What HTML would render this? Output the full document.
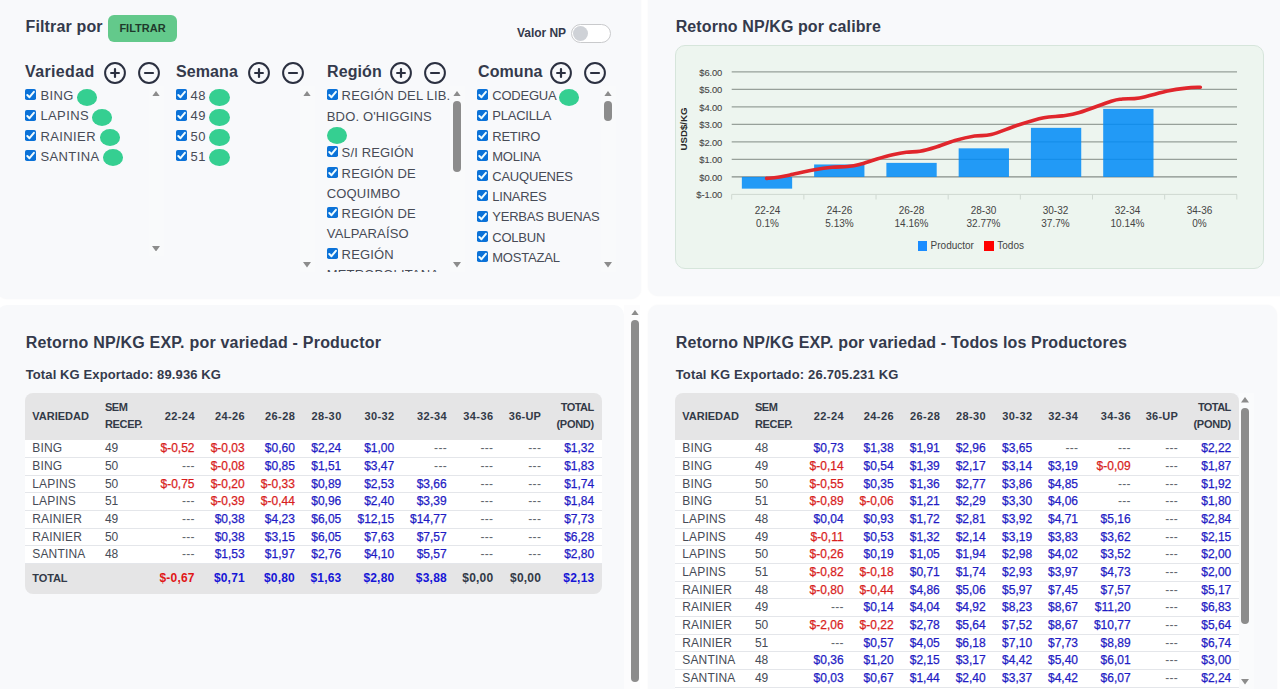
<!DOCTYPE html>
<html><head><meta charset="utf-8"><title>Retorno NP/KG</title>
<style>
html,body{margin:0;padding:0;}
body{width:1280px;height:689px;overflow:hidden;position:relative;background:#ffffff;font-family:"Liberation Sans", sans-serif;}
.t{position:absolute;white-space:nowrap;}
.r{position:absolute;}
</style></head><body>
<div class="r" style="left:-3.00px;top:-20.00px;width:644.00px;height:319.00px;background:#f8f9fb;border-radius:10px;box-shadow:0 0 2px rgba(0,0,0,0.04);"></div>
<div class="r" style="left:648.00px;top:-20.00px;width:645.00px;height:316.00px;background:#f8f9fb;border-radius:10px;box-shadow:0 0 2px rgba(0,0,0,0.04);"></div>
<div class="r" style="left:-3.00px;top:305.00px;width:627.00px;height:420.00px;background:#f8f9fb;border-radius:10px;"></div>
<div class="r" style="left:648.00px;top:305.00px;width:629.00px;height:420.00px;background:#f8f9fb;border-radius:10px;box-shadow:0 0 2px rgba(0,0,0,0.04);"></div>
<div class="t" style="left:25.50px;top:18.76px;font-size:16px;line-height:16px;font-weight:bold;color:#343a4c;letter-spacing:0.15px;">Filtrar por</div>
<div class="r" style="left:108.00px;top:15.00px;width:69.00px;height:27.00px;background:#63c98b;border-radius:6px;"></div>
<div class="t" style="left:-57.50px;width:400px;text-align:center;top:22.59px;font-size:11px;line-height:11px;font-weight:bold;color:#1f3a2b;">FILTRAR</div>
<div class="t" style="left:517.00px;top:26.84px;font-size:12px;line-height:12px;font-weight:bold;color:#343a4c;letter-spacing:-0.05px;">Valor NP</div>
<div class="r" style="left:570.50px;top:23.50px;width:40.00px;height:19.50px;box-sizing:border-box;border:1px solid #c9cacc;background:#fff;border-radius:10px;"></div>
<div class="r" style="left:573.00px;top:26.00px;width:15.00px;height:15.00px;background:#cfd2d7;border-radius:50%;"></div>
<div class="t" style="left:25.00px;top:64.21px;font-size:16px;line-height:16px;font-weight:bold;color:#343a4c;letter-spacing:0.35px;">Variedad</div>
<svg class="r" style="left:104.00px;top:61.70px" width="22" height="22" viewBox="0 0 22 22"><circle cx="11" cy="11" r="9.9" fill="none" stroke="#2b3040" stroke-width="2"/><path d="M11 7.1V14.9M7.1 11H14.9" stroke="#2b3040" stroke-width="2.2" stroke-linecap="round"/></svg>
<svg class="r" style="left:137.50px;top:61.70px" width="22" height="22" viewBox="0 0 22 22"><circle cx="11" cy="11" r="9.9" fill="none" stroke="#2b3040" stroke-width="2"/><path d="M7.0 11H15.0" stroke="#2b3040" stroke-width="2.2" stroke-linecap="round"/></svg>
<div class="t" style="left:176.00px;top:64.21px;font-size:16px;line-height:16px;font-weight:bold;color:#343a4c;letter-spacing:0.1px;">Semana</div>
<svg class="r" style="left:248.00px;top:61.70px" width="22" height="22" viewBox="0 0 22 22"><circle cx="11" cy="11" r="9.9" fill="none" stroke="#2b3040" stroke-width="2"/><path d="M11 7.1V14.9M7.1 11H14.9" stroke="#2b3040" stroke-width="2.2" stroke-linecap="round"/></svg>
<svg class="r" style="left:282.00px;top:61.70px" width="22" height="22" viewBox="0 0 22 22"><circle cx="11" cy="11" r="9.9" fill="none" stroke="#2b3040" stroke-width="2"/><path d="M7.0 11H15.0" stroke="#2b3040" stroke-width="2.2" stroke-linecap="round"/></svg>
<div class="t" style="left:327.00px;top:64.21px;font-size:16px;line-height:16px;font-weight:bold;color:#343a4c;letter-spacing:0.1px;">Región</div>
<svg class="r" style="left:390.10px;top:61.70px" width="22" height="22" viewBox="0 0 22 22"><circle cx="11" cy="11" r="9.9" fill="none" stroke="#2b3040" stroke-width="2"/><path d="M11 7.1V14.9M7.1 11H14.9" stroke="#2b3040" stroke-width="2.2" stroke-linecap="round"/></svg>
<svg class="r" style="left:423.50px;top:61.70px" width="22" height="22" viewBox="0 0 22 22"><circle cx="11" cy="11" r="9.9" fill="none" stroke="#2b3040" stroke-width="2"/><path d="M7.0 11H15.0" stroke="#2b3040" stroke-width="2.2" stroke-linecap="round"/></svg>
<div class="t" style="left:478.00px;top:64.21px;font-size:16px;line-height:16px;font-weight:bold;color:#343a4c;letter-spacing:0.1px;">Comuna</div>
<svg class="r" style="left:550.00px;top:61.70px" width="22" height="22" viewBox="0 0 22 22"><circle cx="11" cy="11" r="9.9" fill="none" stroke="#2b3040" stroke-width="2"/><path d="M11 7.1V14.9M7.1 11H14.9" stroke="#2b3040" stroke-width="2.2" stroke-linecap="round"/></svg>
<svg class="r" style="left:583.70px;top:61.70px" width="22" height="22" viewBox="0 0 22 22"><circle cx="11" cy="11" r="9.9" fill="none" stroke="#2b3040" stroke-width="2"/><path d="M7.0 11H15.0" stroke="#2b3040" stroke-width="2.2" stroke-linecap="round"/></svg>
<svg class="r" style="left:25.30px;top:89.30px" width="11" height="11" viewBox="0 0 11 11"><rect x="0" y="0" width="11" height="11" rx="1.8" fill="#0b72d8"/><path d="M2.3 6.0L4.5 8.2L8.9 2.8" fill="none" stroke="#effcff" stroke-width="2" stroke-linecap="round" stroke-linejoin="round"/></svg>
<div class="t" style="left:40.40px;top:89.20px;font-size:13px;line-height:13px;font-weight:normal;color:#474b56;letter-spacing:0.4px;">BING</div>
<div class="r" style="left:77.00px;top:88.50px;width:20.40px;height:17.00px;background:#35cf91;border-radius:50%;"></div>
<svg class="r" style="left:25.30px;top:109.50px" width="11" height="11" viewBox="0 0 11 11"><rect x="0" y="0" width="11" height="11" rx="1.8" fill="#0b72d8"/><path d="M2.3 6.0L4.5 8.2L8.9 2.8" fill="none" stroke="#effcff" stroke-width="2" stroke-linecap="round" stroke-linejoin="round"/></svg>
<div class="t" style="left:40.40px;top:109.40px;font-size:13px;line-height:13px;font-weight:normal;color:#474b56;letter-spacing:0.4px;">LAPINS</div>
<div class="r" style="left:92.00px;top:108.70px;width:20.40px;height:17.00px;background:#35cf91;border-radius:50%;"></div>
<svg class="r" style="left:25.30px;top:129.70px" width="11" height="11" viewBox="0 0 11 11"><rect x="0" y="0" width="11" height="11" rx="1.8" fill="#0b72d8"/><path d="M2.3 6.0L4.5 8.2L8.9 2.8" fill="none" stroke="#effcff" stroke-width="2" stroke-linecap="round" stroke-linejoin="round"/></svg>
<div class="t" style="left:40.40px;top:129.60px;font-size:13px;line-height:13px;font-weight:normal;color:#474b56;letter-spacing:0.4px;">RAINIER</div>
<div class="r" style="left:99.50px;top:128.90px;width:20.40px;height:17.00px;background:#35cf91;border-radius:50%;"></div>
<svg class="r" style="left:25.30px;top:149.90px" width="11" height="11" viewBox="0 0 11 11"><rect x="0" y="0" width="11" height="11" rx="1.8" fill="#0b72d8"/><path d="M2.3 6.0L4.5 8.2L8.9 2.8" fill="none" stroke="#effcff" stroke-width="2" stroke-linecap="round" stroke-linejoin="round"/></svg>
<div class="t" style="left:40.40px;top:149.80px;font-size:13px;line-height:13px;font-weight:normal;color:#474b56;letter-spacing:0.4px;">SANTINA</div>
<div class="r" style="left:103.00px;top:149.10px;width:20.40px;height:17.00px;background:#35cf91;border-radius:50%;"></div>
<svg class="r" style="left:175.60px;top:89.30px" width="11" height="11" viewBox="0 0 11 11"><rect x="0" y="0" width="11" height="11" rx="1.8" fill="#0b72d8"/><path d="M2.3 6.0L4.5 8.2L8.9 2.8" fill="none" stroke="#effcff" stroke-width="2" stroke-linecap="round" stroke-linejoin="round"/></svg>
<div class="t" style="left:190.60px;top:89.20px;font-size:13px;line-height:13px;font-weight:normal;color:#474b56;letter-spacing:0.4px;">48</div>
<div class="r" style="left:209.30px;top:88.50px;width:20.40px;height:17.00px;background:#35cf91;border-radius:50%;"></div>
<svg class="r" style="left:175.60px;top:109.50px" width="11" height="11" viewBox="0 0 11 11"><rect x="0" y="0" width="11" height="11" rx="1.8" fill="#0b72d8"/><path d="M2.3 6.0L4.5 8.2L8.9 2.8" fill="none" stroke="#effcff" stroke-width="2" stroke-linecap="round" stroke-linejoin="round"/></svg>
<div class="t" style="left:190.60px;top:109.40px;font-size:13px;line-height:13px;font-weight:normal;color:#474b56;letter-spacing:0.4px;">49</div>
<div class="r" style="left:209.30px;top:108.70px;width:20.40px;height:17.00px;background:#35cf91;border-radius:50%;"></div>
<svg class="r" style="left:175.60px;top:129.70px" width="11" height="11" viewBox="0 0 11 11"><rect x="0" y="0" width="11" height="11" rx="1.8" fill="#0b72d8"/><path d="M2.3 6.0L4.5 8.2L8.9 2.8" fill="none" stroke="#effcff" stroke-width="2" stroke-linecap="round" stroke-linejoin="round"/></svg>
<div class="t" style="left:190.60px;top:129.60px;font-size:13px;line-height:13px;font-weight:normal;color:#474b56;letter-spacing:0.4px;">50</div>
<div class="r" style="left:209.30px;top:128.90px;width:20.40px;height:17.00px;background:#35cf91;border-radius:50%;"></div>
<svg class="r" style="left:175.60px;top:149.90px" width="11" height="11" viewBox="0 0 11 11"><rect x="0" y="0" width="11" height="11" rx="1.8" fill="#0b72d8"/><path d="M2.3 6.0L4.5 8.2L8.9 2.8" fill="none" stroke="#effcff" stroke-width="2" stroke-linecap="round" stroke-linejoin="round"/></svg>
<div class="t" style="left:190.60px;top:149.80px;font-size:13px;line-height:13px;font-weight:normal;color:#474b56;letter-spacing:0.4px;">51</div>
<div class="r" style="left:209.30px;top:149.10px;width:20.40px;height:17.00px;background:#35cf91;border-radius:50%;"></div>
<div class="r" style="left:320px;top:86px;width:150px;height:186px;overflow:hidden">
<svg class="r" style="left:6.80px;top:3.30px" width="11" height="11" viewBox="0 0 11 11"><rect x="0" y="0" width="11" height="11" rx="1.8" fill="#0b72d8"/><path d="M2.3 6.0L4.5 8.2L8.9 2.8" fill="none" stroke="#effcff" stroke-width="2" stroke-linecap="round" stroke-linejoin="round"/></svg>
<div class="t" style="left:21.60px;top:3.20px;font-size:13px;line-height:13px;color:#474b56;letter-spacing:0.15px;white-space:nowrap">REGIÓN DEL LIB.</div>
<div class="t" style="left:6.80px;top:23.90px;font-size:13px;line-height:13px;color:#474b56;letter-spacing:0.15px;white-space:nowrap">BDO. O'HIGGINS</div>
<svg class="r" style="left:6.80px;top:60.40px" width="11" height="11" viewBox="0 0 11 11"><rect x="0" y="0" width="11" height="11" rx="1.8" fill="#0b72d8"/><path d="M2.3 6.0L4.5 8.2L8.9 2.8" fill="none" stroke="#effcff" stroke-width="2" stroke-linecap="round" stroke-linejoin="round"/></svg>
<div class="t" style="left:21.60px;top:60.30px;font-size:13px;line-height:13px;color:#474b56;letter-spacing:0.15px;white-space:nowrap">S/I REGIÓN</div>
<svg class="r" style="left:6.80px;top:81.00px" width="11" height="11" viewBox="0 0 11 11"><rect x="0" y="0" width="11" height="11" rx="1.8" fill="#0b72d8"/><path d="M2.3 6.0L4.5 8.2L8.9 2.8" fill="none" stroke="#effcff" stroke-width="2" stroke-linecap="round" stroke-linejoin="round"/></svg>
<div class="t" style="left:21.60px;top:80.90px;font-size:13px;line-height:13px;color:#474b56;letter-spacing:0.15px;white-space:nowrap">REGIÓN DE</div>
<div class="t" style="left:6.80px;top:100.80px;font-size:13px;line-height:13px;color:#474b56;letter-spacing:0.15px;white-space:nowrap">COQUIMBO</div>
<svg class="r" style="left:6.80px;top:121.10px" width="11" height="11" viewBox="0 0 11 11"><rect x="0" y="0" width="11" height="11" rx="1.8" fill="#0b72d8"/><path d="M2.3 6.0L4.5 8.2L8.9 2.8" fill="none" stroke="#effcff" stroke-width="2" stroke-linecap="round" stroke-linejoin="round"/></svg>
<div class="t" style="left:21.60px;top:121.00px;font-size:13px;line-height:13px;color:#474b56;letter-spacing:0.15px;white-space:nowrap">REGIÓN DE</div>
<div class="t" style="left:6.80px;top:141.00px;font-size:13px;line-height:13px;color:#474b56;letter-spacing:0.15px;white-space:nowrap">VALPARAÍSO</div>
<svg class="r" style="left:6.80px;top:161.60px" width="11" height="11" viewBox="0 0 11 11"><rect x="0" y="0" width="11" height="11" rx="1.8" fill="#0b72d8"/><path d="M2.3 6.0L4.5 8.2L8.9 2.8" fill="none" stroke="#effcff" stroke-width="2" stroke-linecap="round" stroke-linejoin="round"/></svg>
<div class="t" style="left:21.60px;top:161.50px;font-size:13px;line-height:13px;color:#474b56;letter-spacing:0.15px;white-space:nowrap">REGIÓN</div>
<div class="t" style="left:6.80px;top:181.70px;font-size:13px;line-height:13px;color:#474b56;letter-spacing:0.15px;white-space:nowrap">METROPOLITANA</div>
<div class="r" style="left:6.8px;top:40.60px;width:19.8px;height:17px;background:#35cf91;border-radius:50%"></div>
</div>
<svg class="r" style="left:477.20px;top:89.30px" width="11" height="11" viewBox="0 0 11 11"><rect x="0" y="0" width="11" height="11" rx="1.8" fill="#0b72d8"/><path d="M2.3 6.0L4.5 8.2L8.9 2.8" fill="none" stroke="#effcff" stroke-width="2" stroke-linecap="round" stroke-linejoin="round"/></svg>
<div class="t" style="left:492.20px;top:89.20px;font-size:13px;line-height:13px;font-weight:normal;color:#474b56;letter-spacing:-0.2px;">CODEGUA</div>
<svg class="r" style="left:477.20px;top:109.50px" width="11" height="11" viewBox="0 0 11 11"><rect x="0" y="0" width="11" height="11" rx="1.8" fill="#0b72d8"/><path d="M2.3 6.0L4.5 8.2L8.9 2.8" fill="none" stroke="#effcff" stroke-width="2" stroke-linecap="round" stroke-linejoin="round"/></svg>
<div class="t" style="left:492.20px;top:109.40px;font-size:13px;line-height:13px;font-weight:normal;color:#474b56;letter-spacing:-0.2px;">PLACILLA</div>
<svg class="r" style="left:477.20px;top:129.70px" width="11" height="11" viewBox="0 0 11 11"><rect x="0" y="0" width="11" height="11" rx="1.8" fill="#0b72d8"/><path d="M2.3 6.0L4.5 8.2L8.9 2.8" fill="none" stroke="#effcff" stroke-width="2" stroke-linecap="round" stroke-linejoin="round"/></svg>
<div class="t" style="left:492.20px;top:129.60px;font-size:13px;line-height:13px;font-weight:normal;color:#474b56;letter-spacing:-0.2px;">RETIRO</div>
<svg class="r" style="left:477.20px;top:149.90px" width="11" height="11" viewBox="0 0 11 11"><rect x="0" y="0" width="11" height="11" rx="1.8" fill="#0b72d8"/><path d="M2.3 6.0L4.5 8.2L8.9 2.8" fill="none" stroke="#effcff" stroke-width="2" stroke-linecap="round" stroke-linejoin="round"/></svg>
<div class="t" style="left:492.20px;top:149.80px;font-size:13px;line-height:13px;font-weight:normal;color:#474b56;letter-spacing:-0.2px;">MOLINA</div>
<svg class="r" style="left:477.20px;top:170.10px" width="11" height="11" viewBox="0 0 11 11"><rect x="0" y="0" width="11" height="11" rx="1.8" fill="#0b72d8"/><path d="M2.3 6.0L4.5 8.2L8.9 2.8" fill="none" stroke="#effcff" stroke-width="2" stroke-linecap="round" stroke-linejoin="round"/></svg>
<div class="t" style="left:492.20px;top:170.00px;font-size:13px;line-height:13px;font-weight:normal;color:#474b56;letter-spacing:-0.2px;">CAUQUENES</div>
<svg class="r" style="left:477.20px;top:190.30px" width="11" height="11" viewBox="0 0 11 11"><rect x="0" y="0" width="11" height="11" rx="1.8" fill="#0b72d8"/><path d="M2.3 6.0L4.5 8.2L8.9 2.8" fill="none" stroke="#effcff" stroke-width="2" stroke-linecap="round" stroke-linejoin="round"/></svg>
<div class="t" style="left:492.20px;top:190.20px;font-size:13px;line-height:13px;font-weight:normal;color:#474b56;letter-spacing:-0.2px;">LINARES</div>
<svg class="r" style="left:477.20px;top:210.50px" width="11" height="11" viewBox="0 0 11 11"><rect x="0" y="0" width="11" height="11" rx="1.8" fill="#0b72d8"/><path d="M2.3 6.0L4.5 8.2L8.9 2.8" fill="none" stroke="#effcff" stroke-width="2" stroke-linecap="round" stroke-linejoin="round"/></svg>
<div class="t" style="left:492.20px;top:210.40px;font-size:13px;line-height:13px;font-weight:normal;color:#474b56;letter-spacing:-0.2px;">YERBAS BUENAS</div>
<svg class="r" style="left:477.20px;top:230.70px" width="11" height="11" viewBox="0 0 11 11"><rect x="0" y="0" width="11" height="11" rx="1.8" fill="#0b72d8"/><path d="M2.3 6.0L4.5 8.2L8.9 2.8" fill="none" stroke="#effcff" stroke-width="2" stroke-linecap="round" stroke-linejoin="round"/></svg>
<div class="t" style="left:492.20px;top:230.60px;font-size:13px;line-height:13px;font-weight:normal;color:#474b56;letter-spacing:-0.2px;">COLBUN</div>
<svg class="r" style="left:477.20px;top:250.90px" width="11" height="11" viewBox="0 0 11 11"><rect x="0" y="0" width="11" height="11" rx="1.8" fill="#0b72d8"/><path d="M2.3 6.0L4.5 8.2L8.9 2.8" fill="none" stroke="#effcff" stroke-width="2" stroke-linecap="round" stroke-linejoin="round"/></svg>
<div class="t" style="left:492.20px;top:250.80px;font-size:13px;line-height:13px;font-weight:normal;color:#474b56;letter-spacing:-0.2px;">MOSTAZAL</div>
<div class="r" style="left:558.80px;top:88.50px;width:20.40px;height:17.00px;background:#35cf91;border-radius:50%;"></div>
<div class="r" style="left:148.50px;top:86.00px;width:15.00px;height:169.50px;background:rgba(255,255,255,0.2);"></div>
<svg class="r" style="left:152.00px;top:90.50px" width="8" height="5.5" viewBox="0 0 8 5.5"><path d="M4 0L8 5.5H0Z" fill="#8c8c8c"/></svg>
<svg class="r" style="left:152.00px;top:245.50px" width="8" height="5.5" viewBox="0 0 8 5.5"><path d="M0 0H8L4 5.5Z" fill="#8c8c8c"/></svg>
<div class="r" style="left:299.50px;top:86.00px;width:15.00px;height:186.00px;background:rgba(255,255,255,0.2);"></div>
<svg class="r" style="left:303.00px;top:90.50px" width="8" height="5.5" viewBox="0 0 8 5.5"><path d="M4 0L8 5.5H0Z" fill="#8c8c8c"/></svg>
<svg class="r" style="left:303.00px;top:262.00px" width="8" height="5.5" viewBox="0 0 8 5.5"><path d="M0 0H8L4 5.5Z" fill="#8c8c8c"/></svg>
<div class="r" style="left:449.70px;top:86.00px;width:15.00px;height:186.00px;background:rgba(255,255,255,0.2);"></div>
<svg class="r" style="left:453.20px;top:90.50px" width="8" height="5.5" viewBox="0 0 8 5.5"><path d="M4 0L8 5.5H0Z" fill="#8c8c8c"/></svg>
<svg class="r" style="left:453.20px;top:262.00px" width="8" height="5.5" viewBox="0 0 8 5.5"><path d="M0 0H8L4 5.5Z" fill="#8c8c8c"/></svg>
<div class="r" style="left:600.50px;top:86.00px;width:15.00px;height:186.00px;background:rgba(255,255,255,0.2);"></div>
<svg class="r" style="left:604.00px;top:90.50px" width="8" height="5.5" viewBox="0 0 8 5.5"><path d="M4 0L8 5.5H0Z" fill="#8c8c8c"/></svg>
<svg class="r" style="left:604.00px;top:262.00px" width="8" height="5.5" viewBox="0 0 8 5.5"><path d="M0 0H8L4 5.5Z" fill="#8c8c8c"/></svg>
<div class="r" style="left:453.30px;top:101.20px;width:7.80px;height:71.20px;background:#8c8c8c;border-radius:4px;"></div>
<div class="r" style="left:604.10px;top:101.20px;width:7.80px;height:20.30px;background:#8c8c8c;border-radius:4px;"></div>
<div class="t" style="left:675.70px;top:18.56px;font-size:16px;line-height:16px;font-weight:bold;color:#343a4c;letter-spacing:0.1px;">Retorno NP/KG por calibre</div>
<div class="r" style="left:675.30px;top:45.40px;width:588.40px;height:223.40px;box-sizing:border-box;background:#edf5ef;border:1px solid #d6e5db;border-radius:10px;"></div>
<svg class="r" style="left:0;top:0" width="1280" height="300" viewBox="0 0 1280 300">
<line x1="731.7" x2="1237" y1="71.8" y2="71.8" stroke="#222a24" stroke-opacity="0.42" stroke-width="1.25"/>
<line x1="731.7" x2="1237" y1="89.3" y2="89.3" stroke="#222a24" stroke-opacity="0.42" stroke-width="1.25"/>
<line x1="731.7" x2="1237" y1="106.8" y2="106.8" stroke="#222a24" stroke-opacity="0.42" stroke-width="1.25"/>
<line x1="731.7" x2="1237" y1="124.3" y2="124.3" stroke="#222a24" stroke-opacity="0.42" stroke-width="1.25"/>
<line x1="731.7" x2="1237" y1="141.8" y2="141.8" stroke="#222a24" stroke-opacity="0.42" stroke-width="1.25"/>
<line x1="731.7" x2="1237" y1="159.3" y2="159.3" stroke="#222a24" stroke-opacity="0.42" stroke-width="1.25"/>
<line x1="731.7" x2="1237" y1="176.9" y2="176.9" stroke="#222a24" stroke-opacity="0.5" stroke-width="1.25"/>
<rect x="741.85" y="176.90" width="50.3" height="11.74" fill="#008bf7" fill-opacity="0.86"/>
<rect x="814.12" y="164.46" width="50.3" height="12.44" fill="#008bf7" fill-opacity="0.86"/>
<rect x="886.39" y="162.88" width="50.3" height="14.02" fill="#008bf7" fill-opacity="0.86"/>
<rect x="958.66" y="148.34" width="50.3" height="28.56" fill="#008bf7" fill-opacity="0.86"/>
<rect x="1030.93" y="127.84" width="50.3" height="49.06" fill="#008bf7" fill-opacity="0.86"/>
<rect x="1103.20" y="108.92" width="50.3" height="67.98" fill="#008bf7" fill-opacity="0.86"/>
<line x1="731.7" x2="1237" y1="194.4" y2="194.4" stroke="#cfd8d1" stroke-width="1"/>
<line x1="731.70" x2="731.70" y1="194.4" y2="199.5" stroke="#cfd8d1" stroke-width="1"/>
<line x1="803.86" x2="803.86" y1="194.4" y2="199.5" stroke="#cfd8d1" stroke-width="1"/>
<line x1="876.02" x2="876.02" y1="194.4" y2="199.5" stroke="#cfd8d1" stroke-width="1"/>
<line x1="948.18" x2="948.18" y1="194.4" y2="199.5" stroke="#cfd8d1" stroke-width="1"/>
<line x1="1020.34" x2="1020.34" y1="194.4" y2="199.5" stroke="#cfd8d1" stroke-width="1"/>
<line x1="1092.50" x2="1092.50" y1="194.4" y2="199.5" stroke="#cfd8d1" stroke-width="1"/>
<line x1="1164.66" x2="1164.66" y1="194.4" y2="199.5" stroke="#cfd8d1" stroke-width="1"/>
<line x1="1236.82" x2="1236.82" y1="194.4" y2="199.5" stroke="#cfd8d1" stroke-width="1"/>
<path d="M766.6,178.4 C768.50,178.22 774.10,177.88 778,177.3 C781.90,176.72 783.92,176.15 790,174.9 C796.08,173.65 807.50,171.07 814.5,169.8 C821.50,168.53 826.47,167.85 832,167.3 C837.53,166.75 843.13,166.97 847.7,166.5 C852.27,166.03 854.52,165.75 859.4,164.5 C864.28,163.25 871.47,160.62 877,159 C882.53,157.38 887.72,155.93 892.6,154.8 C897.48,153.67 901.73,152.79 906.3,152.2 C910.87,151.61 915.13,152.07 920,151.25 C924.87,150.43 929.67,149.09 935.5,147.3 C941.33,145.51 948.48,142.38 955,140.5 C961.52,138.62 968.56,136.98 974.6,136 C980.64,135.02 984.10,136.39 991.25,134.6 C998.40,132.81 1008.75,128.06 1017.5,125.25 C1026.25,122.44 1036.25,119.31 1043.75,117.75 C1051.25,116.19 1056.56,116.78 1062.5,115.9 C1068.44,115.03 1071.28,114.94 1079.4,112.5 C1087.53,110.06 1104.07,103.50 1111.25,101.25 C1118.43,99.00 1117.81,99.56 1122.5,99 C1127.19,98.44 1131.90,99.23 1139.4,97.9 C1146.90,96.57 1159.69,92.63 1167.5,91 C1175.31,89.37 1180.78,88.73 1186.25,88.1 C1191.72,87.47 1197.96,87.35 1200.3,87.2" fill="none" stroke="#e0262c" stroke-width="3.6" stroke-linecap="round" stroke-linejoin="round"/>
</svg>
<div class="t" style="left:322.18px;width:400px;text-align:right;top:67.64px;font-size:9.4px;line-height:9.4px;font-weight:normal;color:#474747;letter-spacing:-0.12px;-webkit-text-stroke:0.1px #474747;">$6.00</div>
<div class="t" style="left:322.18px;width:400px;text-align:right;top:85.16px;font-size:9.4px;line-height:9.4px;font-weight:normal;color:#474747;letter-spacing:-0.12px;-webkit-text-stroke:0.1px #474747;">$5.00</div>
<div class="t" style="left:322.18px;width:400px;text-align:right;top:102.68px;font-size:9.4px;line-height:9.4px;font-weight:normal;color:#474747;letter-spacing:-0.12px;-webkit-text-stroke:0.1px #474747;">$4.00</div>
<div class="t" style="left:322.18px;width:400px;text-align:right;top:120.20px;font-size:9.4px;line-height:9.4px;font-weight:normal;color:#474747;letter-spacing:-0.12px;-webkit-text-stroke:0.1px #474747;">$3.00</div>
<div class="t" style="left:322.18px;width:400px;text-align:right;top:137.72px;font-size:9.4px;line-height:9.4px;font-weight:normal;color:#474747;letter-spacing:-0.12px;-webkit-text-stroke:0.1px #474747;">$2.00</div>
<div class="t" style="left:322.18px;width:400px;text-align:right;top:155.24px;font-size:9.4px;line-height:9.4px;font-weight:normal;color:#474747;letter-spacing:-0.12px;-webkit-text-stroke:0.1px #474747;">$1.00</div>
<div class="t" style="left:322.18px;width:400px;text-align:right;top:172.76px;font-size:9.4px;line-height:9.4px;font-weight:normal;color:#474747;letter-spacing:-0.12px;-webkit-text-stroke:0.1px #474747;">$0.00</div>
<div class="t" style="left:322.18px;width:400px;text-align:right;top:190.28px;font-size:9.4px;line-height:9.4px;font-weight:normal;color:#474747;letter-spacing:-0.12px;-webkit-text-stroke:0.1px #474747;">$-1.00</div>
<div class="t" style="left:567.50px;width:400px;text-align:center;top:205.84px;font-size:10px;line-height:10px;font-weight:normal;color:#444;">22-24</div>
<div class="t" style="left:567.50px;width:400px;text-align:center;top:219.23px;font-size:10px;line-height:10px;font-weight:normal;color:#444;">0.1%</div>
<div class="t" style="left:639.50px;width:400px;text-align:center;top:205.84px;font-size:10px;line-height:10px;font-weight:normal;color:#444;">24-26</div>
<div class="t" style="left:639.50px;width:400px;text-align:center;top:219.23px;font-size:10px;line-height:10px;font-weight:normal;color:#444;">5.13%</div>
<div class="t" style="left:711.50px;width:400px;text-align:center;top:205.84px;font-size:10px;line-height:10px;font-weight:normal;color:#444;">26-28</div>
<div class="t" style="left:711.50px;width:400px;text-align:center;top:219.23px;font-size:10px;line-height:10px;font-weight:normal;color:#444;">14.16%</div>
<div class="t" style="left:783.50px;width:400px;text-align:center;top:205.84px;font-size:10px;line-height:10px;font-weight:normal;color:#444;">28-30</div>
<div class="t" style="left:783.50px;width:400px;text-align:center;top:219.23px;font-size:10px;line-height:10px;font-weight:normal;color:#444;">32.77%</div>
<div class="t" style="left:855.50px;width:400px;text-align:center;top:205.84px;font-size:10px;line-height:10px;font-weight:normal;color:#444;">30-32</div>
<div class="t" style="left:855.50px;width:400px;text-align:center;top:219.23px;font-size:10px;line-height:10px;font-weight:normal;color:#444;">37.7%</div>
<div class="t" style="left:927.50px;width:400px;text-align:center;top:205.84px;font-size:10px;line-height:10px;font-weight:normal;color:#444;">32-34</div>
<div class="t" style="left:927.50px;width:400px;text-align:center;top:219.23px;font-size:10px;line-height:10px;font-weight:normal;color:#444;">10.14%</div>
<div class="t" style="left:999.50px;width:400px;text-align:center;top:205.84px;font-size:10px;line-height:10px;font-weight:normal;color:#444;">34-36</div>
<div class="t" style="left:999.50px;width:400px;text-align:center;top:219.23px;font-size:10px;line-height:10px;font-weight:normal;color:#444;">0%</div>
<div class="t" style="left:483.60px;width:400px;text-align:center;top:124.19px;font-size:9.7px;line-height:9.7px;font-weight:bold;color:#2a2a2a;transform:rotate(-90deg);transform-origin:200px 5px;">USD$/KG</div>
<div class="r" style="left:917.50px;top:241.30px;width:9.60px;height:9.70px;background:#1a8cff;"></div>
<div class="t" style="left:930.60px;top:241.28px;font-size:10px;line-height:10px;font-weight:normal;color:#444;">Productor</div>
<div class="r" style="left:984.00px;top:241.30px;width:9.70px;height:9.70px;background:#ff0000;"></div>
<div class="t" style="left:997.30px;top:241.28px;font-size:10px;line-height:10px;font-weight:normal;color:#444;">Todos</div>
<div class="t" style="left:25.70px;top:335.21px;font-size:16px;line-height:16px;font-weight:bold;color:#343a4c;letter-spacing:0.21px;">Retorno NP/KG EXP. por variedad - Productor</div>
<div class="t" style="left:25.70px;top:367.70px;font-size:13px;line-height:13px;font-weight:bold;color:#343a4c;letter-spacing:0.12px;">Total KG Exportado: 89.936 KG</div>
<div class="r" style="left:25.30px;top:393.20px;width:576.45px;height:46.60px;background:#e5e5e6;border-radius:8px 8px 0 0;"></div>
<div class="r" style="left:25.30px;top:439.80px;width:576.45px;height:123.76px;background:#fff;"></div>
<div class="r" style="left:25.30px;top:456.98px;width:576.45px;height:1.00px;background:#e4e6ea;"></div>
<div class="r" style="left:25.30px;top:474.66px;width:576.45px;height:1.00px;background:#e4e6ea;"></div>
<div class="r" style="left:25.30px;top:492.34px;width:576.45px;height:1.00px;background:#e4e6ea;"></div>
<div class="r" style="left:25.30px;top:510.02px;width:576.45px;height:1.00px;background:#e4e6ea;"></div>
<div class="r" style="left:25.30px;top:527.70px;width:576.45px;height:1.00px;background:#e4e6ea;"></div>
<div class="r" style="left:25.30px;top:545.38px;width:576.45px;height:1.00px;background:#e4e6ea;"></div>
<div class="r" style="left:25.30px;top:563.06px;width:576.45px;height:1.00px;background:#e4e6ea;"></div>
<div class="t" style="left:32.30px;top:410.89px;font-size:11px;line-height:11px;font-weight:bold;color:#333a48;">VARIEDAD</div>
<div class="t" style="left:104.90px;top:402.39px;font-size:11px;line-height:11px;font-weight:bold;color:#333a48;letter-spacing:-0.4px;">SEM</div>
<div class="t" style="left:104.90px;top:419.39px;font-size:11px;line-height:11px;font-weight:bold;color:#333a48;letter-spacing:-0.3px;">RECEP.</div>
<div class="t" style="left:-205.08px;width:400px;text-align:right;top:410.89px;font-size:11px;line-height:11px;font-weight:bold;color:#333a48;letter-spacing:0.42px;">22-24</div>
<div class="t" style="left:-154.88px;width:400px;text-align:right;top:410.89px;font-size:11px;line-height:11px;font-weight:bold;color:#333a48;letter-spacing:0.42px;">24-26</div>
<div class="t" style="left:-104.78px;width:400px;text-align:right;top:410.89px;font-size:11px;line-height:11px;font-weight:bold;color:#333a48;letter-spacing:0.42px;">26-28</div>
<div class="t" style="left:-58.33px;width:400px;text-align:right;top:410.89px;font-size:11px;line-height:11px;font-weight:bold;color:#333a48;letter-spacing:0.42px;">28-30</div>
<div class="t" style="left:-5.38px;width:400px;text-align:right;top:410.89px;font-size:11px;line-height:11px;font-weight:bold;color:#333a48;letter-spacing:0.42px;">30-32</div>
<div class="t" style="left:47.12px;width:400px;text-align:right;top:410.89px;font-size:11px;line-height:11px;font-weight:bold;color:#333a48;letter-spacing:0.42px;">32-34</div>
<div class="t" style="left:93.52px;width:400px;text-align:right;top:410.89px;font-size:11px;line-height:11px;font-weight:bold;color:#333a48;letter-spacing:0.42px;">34-36</div>
<div class="t" style="left:141.12px;width:400px;text-align:right;top:410.89px;font-size:11px;line-height:11px;font-weight:bold;color:#333a48;letter-spacing:0.22px;">36-UP</div>
<div class="t" style="left:193.63px;width:400px;text-align:right;top:402.39px;font-size:11px;line-height:11px;font-weight:bold;color:#333a48;letter-spacing:-0.57px;">TOTAL</div>
<div class="t" style="left:193.93px;width:400px;text-align:right;top:419.39px;font-size:11px;line-height:11px;font-weight:bold;color:#333a48;letter-spacing:-0.27px;">(POND)</div>
<div class="t" style="left:32.30px;top:442.14px;font-size:12px;line-height:12px;font-weight:normal;color:#464b56;letter-spacing:0.15px;">BING</div>
<div class="t" style="left:104.90px;top:442.14px;font-size:12px;line-height:12px;font-weight:normal;color:#464b56;">49</div>
<div class="t" style="left:-205.50px;width:400px;text-align:right;top:442.14px;font-size:12px;line-height:12px;font-weight:normal;color:#d81e1e;-webkit-text-stroke:0.25px #d81e1e;">$-0,52</div>
<div class="t" style="left:-155.30px;width:400px;text-align:right;top:442.14px;font-size:12px;line-height:12px;font-weight:normal;color:#d81e1e;-webkit-text-stroke:0.25px #d81e1e;">$-0,03</div>
<div class="t" style="left:-105.20px;width:400px;text-align:right;top:442.14px;font-size:12px;line-height:12px;font-weight:normal;color:#1f1cc4;-webkit-text-stroke:0.25px #1f1cc4;">$0,60</div>
<div class="t" style="left:-58.75px;width:400px;text-align:right;top:442.14px;font-size:12px;line-height:12px;font-weight:normal;color:#1f1cc4;-webkit-text-stroke:0.25px #1f1cc4;">$2,24</div>
<div class="t" style="left:-5.80px;width:400px;text-align:right;top:442.14px;font-size:12px;line-height:12px;font-weight:normal;color:#1f1cc4;-webkit-text-stroke:0.25px #1f1cc4;">$1,00</div>
<div class="t" style="left:47.00px;width:400px;text-align:right;top:442.14px;font-size:12px;line-height:12px;font-weight:normal;color:#62666e;letter-spacing:0.3px;">---</div>
<div class="t" style="left:93.40px;width:400px;text-align:right;top:442.14px;font-size:12px;line-height:12px;font-weight:normal;color:#62666e;letter-spacing:0.3px;">---</div>
<div class="t" style="left:141.20px;width:400px;text-align:right;top:442.14px;font-size:12px;line-height:12px;font-weight:normal;color:#62666e;letter-spacing:0.3px;">---</div>
<div class="t" style="left:194.20px;width:400px;text-align:right;top:442.14px;font-size:12px;line-height:12px;font-weight:normal;color:#1f1cc4;-webkit-text-stroke:0.25px #1f1cc4;">$1,32</div>
<div class="t" style="left:32.30px;top:459.82px;font-size:12px;line-height:12px;font-weight:normal;color:#464b56;letter-spacing:0.15px;">BING</div>
<div class="t" style="left:104.90px;top:459.82px;font-size:12px;line-height:12px;font-weight:normal;color:#464b56;">50</div>
<div class="t" style="left:-205.20px;width:400px;text-align:right;top:459.82px;font-size:12px;line-height:12px;font-weight:normal;color:#62666e;letter-spacing:0.3px;">---</div>
<div class="t" style="left:-155.30px;width:400px;text-align:right;top:459.82px;font-size:12px;line-height:12px;font-weight:normal;color:#d81e1e;-webkit-text-stroke:0.25px #d81e1e;">$-0,08</div>
<div class="t" style="left:-105.20px;width:400px;text-align:right;top:459.82px;font-size:12px;line-height:12px;font-weight:normal;color:#1f1cc4;-webkit-text-stroke:0.25px #1f1cc4;">$0,85</div>
<div class="t" style="left:-58.75px;width:400px;text-align:right;top:459.82px;font-size:12px;line-height:12px;font-weight:normal;color:#1f1cc4;-webkit-text-stroke:0.25px #1f1cc4;">$1,51</div>
<div class="t" style="left:-5.80px;width:400px;text-align:right;top:459.82px;font-size:12px;line-height:12px;font-weight:normal;color:#1f1cc4;-webkit-text-stroke:0.25px #1f1cc4;">$3,47</div>
<div class="t" style="left:47.00px;width:400px;text-align:right;top:459.82px;font-size:12px;line-height:12px;font-weight:normal;color:#62666e;letter-spacing:0.3px;">---</div>
<div class="t" style="left:93.40px;width:400px;text-align:right;top:459.82px;font-size:12px;line-height:12px;font-weight:normal;color:#62666e;letter-spacing:0.3px;">---</div>
<div class="t" style="left:141.20px;width:400px;text-align:right;top:459.82px;font-size:12px;line-height:12px;font-weight:normal;color:#62666e;letter-spacing:0.3px;">---</div>
<div class="t" style="left:194.20px;width:400px;text-align:right;top:459.82px;font-size:12px;line-height:12px;font-weight:normal;color:#1f1cc4;-webkit-text-stroke:0.25px #1f1cc4;">$1,83</div>
<div class="t" style="left:32.30px;top:477.50px;font-size:12px;line-height:12px;font-weight:normal;color:#464b56;letter-spacing:0.15px;">LAPINS</div>
<div class="t" style="left:104.90px;top:477.50px;font-size:12px;line-height:12px;font-weight:normal;color:#464b56;">50</div>
<div class="t" style="left:-205.50px;width:400px;text-align:right;top:477.50px;font-size:12px;line-height:12px;font-weight:normal;color:#d81e1e;-webkit-text-stroke:0.25px #d81e1e;">$-0,75</div>
<div class="t" style="left:-155.30px;width:400px;text-align:right;top:477.50px;font-size:12px;line-height:12px;font-weight:normal;color:#d81e1e;-webkit-text-stroke:0.25px #d81e1e;">$-0,20</div>
<div class="t" style="left:-105.20px;width:400px;text-align:right;top:477.50px;font-size:12px;line-height:12px;font-weight:normal;color:#d81e1e;-webkit-text-stroke:0.25px #d81e1e;">$-0,33</div>
<div class="t" style="left:-58.75px;width:400px;text-align:right;top:477.50px;font-size:12px;line-height:12px;font-weight:normal;color:#1f1cc4;-webkit-text-stroke:0.25px #1f1cc4;">$0,89</div>
<div class="t" style="left:-5.80px;width:400px;text-align:right;top:477.50px;font-size:12px;line-height:12px;font-weight:normal;color:#1f1cc4;-webkit-text-stroke:0.25px #1f1cc4;">$2,53</div>
<div class="t" style="left:46.70px;width:400px;text-align:right;top:477.50px;font-size:12px;line-height:12px;font-weight:normal;color:#1f1cc4;-webkit-text-stroke:0.25px #1f1cc4;">$3,66</div>
<div class="t" style="left:93.40px;width:400px;text-align:right;top:477.50px;font-size:12px;line-height:12px;font-weight:normal;color:#62666e;letter-spacing:0.3px;">---</div>
<div class="t" style="left:141.20px;width:400px;text-align:right;top:477.50px;font-size:12px;line-height:12px;font-weight:normal;color:#62666e;letter-spacing:0.3px;">---</div>
<div class="t" style="left:194.20px;width:400px;text-align:right;top:477.50px;font-size:12px;line-height:12px;font-weight:normal;color:#1f1cc4;-webkit-text-stroke:0.25px #1f1cc4;">$1,74</div>
<div class="t" style="left:32.30px;top:495.18px;font-size:12px;line-height:12px;font-weight:normal;color:#464b56;letter-spacing:0.15px;">LAPINS</div>
<div class="t" style="left:104.90px;top:495.18px;font-size:12px;line-height:12px;font-weight:normal;color:#464b56;">51</div>
<div class="t" style="left:-205.20px;width:400px;text-align:right;top:495.18px;font-size:12px;line-height:12px;font-weight:normal;color:#62666e;letter-spacing:0.3px;">---</div>
<div class="t" style="left:-155.30px;width:400px;text-align:right;top:495.18px;font-size:12px;line-height:12px;font-weight:normal;color:#d81e1e;-webkit-text-stroke:0.25px #d81e1e;">$-0,39</div>
<div class="t" style="left:-105.20px;width:400px;text-align:right;top:495.18px;font-size:12px;line-height:12px;font-weight:normal;color:#d81e1e;-webkit-text-stroke:0.25px #d81e1e;">$-0,44</div>
<div class="t" style="left:-58.75px;width:400px;text-align:right;top:495.18px;font-size:12px;line-height:12px;font-weight:normal;color:#1f1cc4;-webkit-text-stroke:0.25px #1f1cc4;">$0,96</div>
<div class="t" style="left:-5.80px;width:400px;text-align:right;top:495.18px;font-size:12px;line-height:12px;font-weight:normal;color:#1f1cc4;-webkit-text-stroke:0.25px #1f1cc4;">$2,40</div>
<div class="t" style="left:46.70px;width:400px;text-align:right;top:495.18px;font-size:12px;line-height:12px;font-weight:normal;color:#1f1cc4;-webkit-text-stroke:0.25px #1f1cc4;">$3,39</div>
<div class="t" style="left:93.40px;width:400px;text-align:right;top:495.18px;font-size:12px;line-height:12px;font-weight:normal;color:#62666e;letter-spacing:0.3px;">---</div>
<div class="t" style="left:141.20px;width:400px;text-align:right;top:495.18px;font-size:12px;line-height:12px;font-weight:normal;color:#62666e;letter-spacing:0.3px;">---</div>
<div class="t" style="left:194.20px;width:400px;text-align:right;top:495.18px;font-size:12px;line-height:12px;font-weight:normal;color:#1f1cc4;-webkit-text-stroke:0.25px #1f1cc4;">$1,84</div>
<div class="t" style="left:32.30px;top:512.86px;font-size:12px;line-height:12px;font-weight:normal;color:#464b56;letter-spacing:0.15px;">RAINIER</div>
<div class="t" style="left:104.90px;top:512.86px;font-size:12px;line-height:12px;font-weight:normal;color:#464b56;">49</div>
<div class="t" style="left:-205.20px;width:400px;text-align:right;top:512.86px;font-size:12px;line-height:12px;font-weight:normal;color:#62666e;letter-spacing:0.3px;">---</div>
<div class="t" style="left:-155.30px;width:400px;text-align:right;top:512.86px;font-size:12px;line-height:12px;font-weight:normal;color:#1f1cc4;-webkit-text-stroke:0.25px #1f1cc4;">$0,38</div>
<div class="t" style="left:-105.20px;width:400px;text-align:right;top:512.86px;font-size:12px;line-height:12px;font-weight:normal;color:#1f1cc4;-webkit-text-stroke:0.25px #1f1cc4;">$4,23</div>
<div class="t" style="left:-58.75px;width:400px;text-align:right;top:512.86px;font-size:12px;line-height:12px;font-weight:normal;color:#1f1cc4;-webkit-text-stroke:0.25px #1f1cc4;">$6,05</div>
<div class="t" style="left:-5.80px;width:400px;text-align:right;top:512.86px;font-size:12px;line-height:12px;font-weight:normal;color:#1f1cc4;-webkit-text-stroke:0.25px #1f1cc4;">$12,15</div>
<div class="t" style="left:46.70px;width:400px;text-align:right;top:512.86px;font-size:12px;line-height:12px;font-weight:normal;color:#1f1cc4;-webkit-text-stroke:0.25px #1f1cc4;">$14,77</div>
<div class="t" style="left:93.40px;width:400px;text-align:right;top:512.86px;font-size:12px;line-height:12px;font-weight:normal;color:#62666e;letter-spacing:0.3px;">---</div>
<div class="t" style="left:141.20px;width:400px;text-align:right;top:512.86px;font-size:12px;line-height:12px;font-weight:normal;color:#62666e;letter-spacing:0.3px;">---</div>
<div class="t" style="left:194.20px;width:400px;text-align:right;top:512.86px;font-size:12px;line-height:12px;font-weight:normal;color:#1f1cc4;-webkit-text-stroke:0.25px #1f1cc4;">$7,73</div>
<div class="t" style="left:32.30px;top:530.54px;font-size:12px;line-height:12px;font-weight:normal;color:#464b56;letter-spacing:0.15px;">RAINIER</div>
<div class="t" style="left:104.90px;top:530.54px;font-size:12px;line-height:12px;font-weight:normal;color:#464b56;">50</div>
<div class="t" style="left:-205.20px;width:400px;text-align:right;top:530.54px;font-size:12px;line-height:12px;font-weight:normal;color:#62666e;letter-spacing:0.3px;">---</div>
<div class="t" style="left:-155.30px;width:400px;text-align:right;top:530.54px;font-size:12px;line-height:12px;font-weight:normal;color:#1f1cc4;-webkit-text-stroke:0.25px #1f1cc4;">$0,38</div>
<div class="t" style="left:-105.20px;width:400px;text-align:right;top:530.54px;font-size:12px;line-height:12px;font-weight:normal;color:#1f1cc4;-webkit-text-stroke:0.25px #1f1cc4;">$3,15</div>
<div class="t" style="left:-58.75px;width:400px;text-align:right;top:530.54px;font-size:12px;line-height:12px;font-weight:normal;color:#1f1cc4;-webkit-text-stroke:0.25px #1f1cc4;">$6,05</div>
<div class="t" style="left:-5.80px;width:400px;text-align:right;top:530.54px;font-size:12px;line-height:12px;font-weight:normal;color:#1f1cc4;-webkit-text-stroke:0.25px #1f1cc4;">$7,63</div>
<div class="t" style="left:46.70px;width:400px;text-align:right;top:530.54px;font-size:12px;line-height:12px;font-weight:normal;color:#1f1cc4;-webkit-text-stroke:0.25px #1f1cc4;">$7,57</div>
<div class="t" style="left:93.40px;width:400px;text-align:right;top:530.54px;font-size:12px;line-height:12px;font-weight:normal;color:#62666e;letter-spacing:0.3px;">---</div>
<div class="t" style="left:141.20px;width:400px;text-align:right;top:530.54px;font-size:12px;line-height:12px;font-weight:normal;color:#62666e;letter-spacing:0.3px;">---</div>
<div class="t" style="left:194.20px;width:400px;text-align:right;top:530.54px;font-size:12px;line-height:12px;font-weight:normal;color:#1f1cc4;-webkit-text-stroke:0.25px #1f1cc4;">$6,28</div>
<div class="t" style="left:32.30px;top:548.22px;font-size:12px;line-height:12px;font-weight:normal;color:#464b56;letter-spacing:0.15px;">SANTINA</div>
<div class="t" style="left:104.90px;top:548.22px;font-size:12px;line-height:12px;font-weight:normal;color:#464b56;">48</div>
<div class="t" style="left:-205.20px;width:400px;text-align:right;top:548.22px;font-size:12px;line-height:12px;font-weight:normal;color:#62666e;letter-spacing:0.3px;">---</div>
<div class="t" style="left:-155.30px;width:400px;text-align:right;top:548.22px;font-size:12px;line-height:12px;font-weight:normal;color:#1f1cc4;-webkit-text-stroke:0.25px #1f1cc4;">$1,53</div>
<div class="t" style="left:-105.20px;width:400px;text-align:right;top:548.22px;font-size:12px;line-height:12px;font-weight:normal;color:#1f1cc4;-webkit-text-stroke:0.25px #1f1cc4;">$1,97</div>
<div class="t" style="left:-58.75px;width:400px;text-align:right;top:548.22px;font-size:12px;line-height:12px;font-weight:normal;color:#1f1cc4;-webkit-text-stroke:0.25px #1f1cc4;">$2,76</div>
<div class="t" style="left:-5.80px;width:400px;text-align:right;top:548.22px;font-size:12px;line-height:12px;font-weight:normal;color:#1f1cc4;-webkit-text-stroke:0.25px #1f1cc4;">$4,10</div>
<div class="t" style="left:46.70px;width:400px;text-align:right;top:548.22px;font-size:12px;line-height:12px;font-weight:normal;color:#1f1cc4;-webkit-text-stroke:0.25px #1f1cc4;">$5,57</div>
<div class="t" style="left:93.40px;width:400px;text-align:right;top:548.22px;font-size:12px;line-height:12px;font-weight:normal;color:#62666e;letter-spacing:0.3px;">---</div>
<div class="t" style="left:141.20px;width:400px;text-align:right;top:548.22px;font-size:12px;line-height:12px;font-weight:normal;color:#62666e;letter-spacing:0.3px;">---</div>
<div class="t" style="left:194.20px;width:400px;text-align:right;top:548.22px;font-size:12px;line-height:12px;font-weight:normal;color:#1f1cc4;-webkit-text-stroke:0.25px #1f1cc4;">$2,80</div>
<div class="r" style="left:25.30px;top:563.56px;width:576.45px;height:30.30px;background:#e5e5e6;border-radius:0 0 8px 8px;"></div>
<div class="t" style="left:32.30px;top:572.95px;font-size:11px;line-height:11px;font-weight:bold;color:#333a48;letter-spacing:-0.1px;">TOTAL</div>
<div class="t" style="left:-205.30px;width:400px;text-align:right;top:572.10px;font-size:12px;line-height:12px;font-weight:bold;color:#e01616;letter-spacing:0.2px;">$-0,67</div>
<div class="t" style="left:-155.10px;width:400px;text-align:right;top:572.10px;font-size:12px;line-height:12px;font-weight:bold;color:#1616d6;letter-spacing:0.2px;">$0,71</div>
<div class="t" style="left:-105.00px;width:400px;text-align:right;top:572.10px;font-size:12px;line-height:12px;font-weight:bold;color:#1616d6;letter-spacing:0.2px;">$0,80</div>
<div class="t" style="left:-58.55px;width:400px;text-align:right;top:572.10px;font-size:12px;line-height:12px;font-weight:bold;color:#1616d6;letter-spacing:0.2px;">$1,63</div>
<div class="t" style="left:-5.60px;width:400px;text-align:right;top:572.10px;font-size:12px;line-height:12px;font-weight:bold;color:#1616d6;letter-spacing:0.2px;">$2,80</div>
<div class="t" style="left:46.90px;width:400px;text-align:right;top:572.10px;font-size:12px;line-height:12px;font-weight:bold;color:#1616d6;letter-spacing:0.2px;">$3,88</div>
<div class="t" style="left:93.30px;width:400px;text-align:right;top:572.10px;font-size:12px;line-height:12px;font-weight:bold;color:#333a48;letter-spacing:0.2px;">$0,00</div>
<div class="t" style="left:141.10px;width:400px;text-align:right;top:572.10px;font-size:12px;line-height:12px;font-weight:bold;color:#333a48;letter-spacing:0.2px;">$0,00</div>
<div class="t" style="left:194.40px;width:400px;text-align:right;top:572.10px;font-size:12px;line-height:12px;font-weight:bold;color:#1616d6;letter-spacing:0.2px;">$2,13</div>
<div class="t" style="left:675.70px;top:335.21px;font-size:16px;line-height:16px;font-weight:bold;color:#343a4c;letter-spacing:0.15px;">Retorno NP/KG EXP. por variedad - Todos los Productores</div>
<div class="t" style="left:675.70px;top:367.70px;font-size:13px;line-height:13px;font-weight:bold;color:#343a4c;letter-spacing:0.17px;">Total KG Exportado: 26.705.231 KG</div>
<div class="r" style="left:675.30px;top:393.20px;width:563.45px;height:46.60px;background:#e5e5e6;border-radius:8px 8px 0 0;"></div>
<div class="r" style="left:675.30px;top:439.80px;width:563.45px;height:265.20px;background:#fff;"></div>
<div class="r" style="left:675.30px;top:456.98px;width:563.45px;height:1.00px;background:#e4e6ea;"></div>
<div class="r" style="left:675.30px;top:474.66px;width:563.45px;height:1.00px;background:#e4e6ea;"></div>
<div class="r" style="left:675.30px;top:492.34px;width:563.45px;height:1.00px;background:#e4e6ea;"></div>
<div class="r" style="left:675.30px;top:510.02px;width:563.45px;height:1.00px;background:#e4e6ea;"></div>
<div class="r" style="left:675.30px;top:527.70px;width:563.45px;height:1.00px;background:#e4e6ea;"></div>
<div class="r" style="left:675.30px;top:545.38px;width:563.45px;height:1.00px;background:#e4e6ea;"></div>
<div class="r" style="left:675.30px;top:563.06px;width:563.45px;height:1.00px;background:#e4e6ea;"></div>
<div class="r" style="left:675.30px;top:580.74px;width:563.45px;height:1.00px;background:#e4e6ea;"></div>
<div class="r" style="left:675.30px;top:598.42px;width:563.45px;height:1.00px;background:#e4e6ea;"></div>
<div class="r" style="left:675.30px;top:616.10px;width:563.45px;height:1.00px;background:#e4e6ea;"></div>
<div class="r" style="left:675.30px;top:633.78px;width:563.45px;height:1.00px;background:#e4e6ea;"></div>
<div class="r" style="left:675.30px;top:651.46px;width:563.45px;height:1.00px;background:#e4e6ea;"></div>
<div class="r" style="left:675.30px;top:669.14px;width:563.45px;height:1.00px;background:#e4e6ea;"></div>
<div class="r" style="left:675.30px;top:686.82px;width:563.45px;height:1.00px;background:#e4e6ea;"></div>
<div class="r" style="left:675.30px;top:704.50px;width:563.45px;height:1.00px;background:#e4e6ea;"></div>
<div class="t" style="left:682.30px;top:410.89px;font-size:11px;line-height:11px;font-weight:bold;color:#333a48;">VARIEDAD</div>
<div class="t" style="left:754.90px;top:402.39px;font-size:11px;line-height:11px;font-weight:bold;color:#333a48;letter-spacing:-0.4px;">SEM</div>
<div class="t" style="left:754.90px;top:419.39px;font-size:11px;line-height:11px;font-weight:bold;color:#333a48;letter-spacing:-0.3px;">RECEP.</div>
<div class="t" style="left:444.02px;width:400px;text-align:right;top:410.89px;font-size:11px;line-height:11px;font-weight:bold;color:#333a48;letter-spacing:0.42px;">22-24</div>
<div class="t" style="left:494.02px;width:400px;text-align:right;top:410.89px;font-size:11px;line-height:11px;font-weight:bold;color:#333a48;letter-spacing:0.42px;">24-26</div>
<div class="t" style="left:540.22px;width:400px;text-align:right;top:410.89px;font-size:11px;line-height:11px;font-weight:bold;color:#333a48;letter-spacing:0.42px;">26-28</div>
<div class="t" style="left:586.12px;width:400px;text-align:right;top:410.89px;font-size:11px;line-height:11px;font-weight:bold;color:#333a48;letter-spacing:0.42px;">28-30</div>
<div class="t" style="left:632.52px;width:400px;text-align:right;top:410.89px;font-size:11px;line-height:11px;font-weight:bold;color:#333a48;letter-spacing:0.42px;">30-32</div>
<div class="t" style="left:678.42px;width:400px;text-align:right;top:410.89px;font-size:11px;line-height:11px;font-weight:bold;color:#333a48;letter-spacing:0.42px;">32-34</div>
<div class="t" style="left:731.02px;width:400px;text-align:right;top:410.89px;font-size:11px;line-height:11px;font-weight:bold;color:#333a48;letter-spacing:0.42px;">34-36</div>
<div class="t" style="left:778.02px;width:400px;text-align:right;top:410.89px;font-size:11px;line-height:11px;font-weight:bold;color:#333a48;letter-spacing:0.22px;">36-UP</div>
<div class="t" style="left:830.68px;width:400px;text-align:right;top:402.39px;font-size:11px;line-height:11px;font-weight:bold;color:#333a48;letter-spacing:-0.57px;">TOTAL</div>
<div class="t" style="left:830.98px;width:400px;text-align:right;top:419.39px;font-size:11px;line-height:11px;font-weight:bold;color:#333a48;letter-spacing:-0.27px;">(POND)</div>
<div class="t" style="left:682.30px;top:442.14px;font-size:12px;line-height:12px;font-weight:normal;color:#464b56;letter-spacing:0.15px;">BING</div>
<div class="t" style="left:754.90px;top:442.14px;font-size:12px;line-height:12px;font-weight:normal;color:#464b56;">48</div>
<div class="t" style="left:443.60px;width:400px;text-align:right;top:442.14px;font-size:12px;line-height:12px;font-weight:normal;color:#1f1cc4;-webkit-text-stroke:0.25px #1f1cc4;">$0,73</div>
<div class="t" style="left:493.60px;width:400px;text-align:right;top:442.14px;font-size:12px;line-height:12px;font-weight:normal;color:#1f1cc4;-webkit-text-stroke:0.25px #1f1cc4;">$1,38</div>
<div class="t" style="left:539.80px;width:400px;text-align:right;top:442.14px;font-size:12px;line-height:12px;font-weight:normal;color:#1f1cc4;-webkit-text-stroke:0.25px #1f1cc4;">$1,91</div>
<div class="t" style="left:585.70px;width:400px;text-align:right;top:442.14px;font-size:12px;line-height:12px;font-weight:normal;color:#1f1cc4;-webkit-text-stroke:0.25px #1f1cc4;">$2,96</div>
<div class="t" style="left:632.10px;width:400px;text-align:right;top:442.14px;font-size:12px;line-height:12px;font-weight:normal;color:#1f1cc4;-webkit-text-stroke:0.25px #1f1cc4;">$3,65</div>
<div class="t" style="left:678.30px;width:400px;text-align:right;top:442.14px;font-size:12px;line-height:12px;font-weight:normal;color:#62666e;letter-spacing:0.3px;">---</div>
<div class="t" style="left:730.90px;width:400px;text-align:right;top:442.14px;font-size:12px;line-height:12px;font-weight:normal;color:#62666e;letter-spacing:0.3px;">---</div>
<div class="t" style="left:778.10px;width:400px;text-align:right;top:442.14px;font-size:12px;line-height:12px;font-weight:normal;color:#62666e;letter-spacing:0.3px;">---</div>
<div class="t" style="left:831.25px;width:400px;text-align:right;top:442.14px;font-size:12px;line-height:12px;font-weight:normal;color:#1f1cc4;-webkit-text-stroke:0.25px #1f1cc4;">$2,22</div>
<div class="t" style="left:682.30px;top:459.82px;font-size:12px;line-height:12px;font-weight:normal;color:#464b56;letter-spacing:0.15px;">BING</div>
<div class="t" style="left:754.90px;top:459.82px;font-size:12px;line-height:12px;font-weight:normal;color:#464b56;">49</div>
<div class="t" style="left:443.60px;width:400px;text-align:right;top:459.82px;font-size:12px;line-height:12px;font-weight:normal;color:#d81e1e;-webkit-text-stroke:0.25px #d81e1e;">$-0,14</div>
<div class="t" style="left:493.60px;width:400px;text-align:right;top:459.82px;font-size:12px;line-height:12px;font-weight:normal;color:#1f1cc4;-webkit-text-stroke:0.25px #1f1cc4;">$0,54</div>
<div class="t" style="left:539.80px;width:400px;text-align:right;top:459.82px;font-size:12px;line-height:12px;font-weight:normal;color:#1f1cc4;-webkit-text-stroke:0.25px #1f1cc4;">$1,39</div>
<div class="t" style="left:585.70px;width:400px;text-align:right;top:459.82px;font-size:12px;line-height:12px;font-weight:normal;color:#1f1cc4;-webkit-text-stroke:0.25px #1f1cc4;">$2,17</div>
<div class="t" style="left:632.10px;width:400px;text-align:right;top:459.82px;font-size:12px;line-height:12px;font-weight:normal;color:#1f1cc4;-webkit-text-stroke:0.25px #1f1cc4;">$3,14</div>
<div class="t" style="left:678.00px;width:400px;text-align:right;top:459.82px;font-size:12px;line-height:12px;font-weight:normal;color:#1f1cc4;-webkit-text-stroke:0.25px #1f1cc4;">$3,19</div>
<div class="t" style="left:730.60px;width:400px;text-align:right;top:459.82px;font-size:12px;line-height:12px;font-weight:normal;color:#d81e1e;-webkit-text-stroke:0.25px #d81e1e;">$-0,09</div>
<div class="t" style="left:778.10px;width:400px;text-align:right;top:459.82px;font-size:12px;line-height:12px;font-weight:normal;color:#62666e;letter-spacing:0.3px;">---</div>
<div class="t" style="left:831.25px;width:400px;text-align:right;top:459.82px;font-size:12px;line-height:12px;font-weight:normal;color:#1f1cc4;-webkit-text-stroke:0.25px #1f1cc4;">$1,87</div>
<div class="t" style="left:682.30px;top:477.50px;font-size:12px;line-height:12px;font-weight:normal;color:#464b56;letter-spacing:0.15px;">BING</div>
<div class="t" style="left:754.90px;top:477.50px;font-size:12px;line-height:12px;font-weight:normal;color:#464b56;">50</div>
<div class="t" style="left:443.60px;width:400px;text-align:right;top:477.50px;font-size:12px;line-height:12px;font-weight:normal;color:#d81e1e;-webkit-text-stroke:0.25px #d81e1e;">$-0,55</div>
<div class="t" style="left:493.60px;width:400px;text-align:right;top:477.50px;font-size:12px;line-height:12px;font-weight:normal;color:#1f1cc4;-webkit-text-stroke:0.25px #1f1cc4;">$0,35</div>
<div class="t" style="left:539.80px;width:400px;text-align:right;top:477.50px;font-size:12px;line-height:12px;font-weight:normal;color:#1f1cc4;-webkit-text-stroke:0.25px #1f1cc4;">$1,36</div>
<div class="t" style="left:585.70px;width:400px;text-align:right;top:477.50px;font-size:12px;line-height:12px;font-weight:normal;color:#1f1cc4;-webkit-text-stroke:0.25px #1f1cc4;">$2,77</div>
<div class="t" style="left:632.10px;width:400px;text-align:right;top:477.50px;font-size:12px;line-height:12px;font-weight:normal;color:#1f1cc4;-webkit-text-stroke:0.25px #1f1cc4;">$3,86</div>
<div class="t" style="left:678.00px;width:400px;text-align:right;top:477.50px;font-size:12px;line-height:12px;font-weight:normal;color:#1f1cc4;-webkit-text-stroke:0.25px #1f1cc4;">$4,85</div>
<div class="t" style="left:730.90px;width:400px;text-align:right;top:477.50px;font-size:12px;line-height:12px;font-weight:normal;color:#62666e;letter-spacing:0.3px;">---</div>
<div class="t" style="left:778.10px;width:400px;text-align:right;top:477.50px;font-size:12px;line-height:12px;font-weight:normal;color:#62666e;letter-spacing:0.3px;">---</div>
<div class="t" style="left:831.25px;width:400px;text-align:right;top:477.50px;font-size:12px;line-height:12px;font-weight:normal;color:#1f1cc4;-webkit-text-stroke:0.25px #1f1cc4;">$1,92</div>
<div class="t" style="left:682.30px;top:495.18px;font-size:12px;line-height:12px;font-weight:normal;color:#464b56;letter-spacing:0.15px;">BING</div>
<div class="t" style="left:754.90px;top:495.18px;font-size:12px;line-height:12px;font-weight:normal;color:#464b56;">51</div>
<div class="t" style="left:443.60px;width:400px;text-align:right;top:495.18px;font-size:12px;line-height:12px;font-weight:normal;color:#d81e1e;-webkit-text-stroke:0.25px #d81e1e;">$-0,89</div>
<div class="t" style="left:493.60px;width:400px;text-align:right;top:495.18px;font-size:12px;line-height:12px;font-weight:normal;color:#d81e1e;-webkit-text-stroke:0.25px #d81e1e;">$-0,06</div>
<div class="t" style="left:539.80px;width:400px;text-align:right;top:495.18px;font-size:12px;line-height:12px;font-weight:normal;color:#1f1cc4;-webkit-text-stroke:0.25px #1f1cc4;">$1,21</div>
<div class="t" style="left:585.70px;width:400px;text-align:right;top:495.18px;font-size:12px;line-height:12px;font-weight:normal;color:#1f1cc4;-webkit-text-stroke:0.25px #1f1cc4;">$2,29</div>
<div class="t" style="left:632.10px;width:400px;text-align:right;top:495.18px;font-size:12px;line-height:12px;font-weight:normal;color:#1f1cc4;-webkit-text-stroke:0.25px #1f1cc4;">$3,30</div>
<div class="t" style="left:678.00px;width:400px;text-align:right;top:495.18px;font-size:12px;line-height:12px;font-weight:normal;color:#1f1cc4;-webkit-text-stroke:0.25px #1f1cc4;">$4,06</div>
<div class="t" style="left:730.90px;width:400px;text-align:right;top:495.18px;font-size:12px;line-height:12px;font-weight:normal;color:#62666e;letter-spacing:0.3px;">---</div>
<div class="t" style="left:778.10px;width:400px;text-align:right;top:495.18px;font-size:12px;line-height:12px;font-weight:normal;color:#62666e;letter-spacing:0.3px;">---</div>
<div class="t" style="left:831.25px;width:400px;text-align:right;top:495.18px;font-size:12px;line-height:12px;font-weight:normal;color:#1f1cc4;-webkit-text-stroke:0.25px #1f1cc4;">$1,80</div>
<div class="t" style="left:682.30px;top:512.86px;font-size:12px;line-height:12px;font-weight:normal;color:#464b56;letter-spacing:0.15px;">LAPINS</div>
<div class="t" style="left:754.90px;top:512.86px;font-size:12px;line-height:12px;font-weight:normal;color:#464b56;">48</div>
<div class="t" style="left:443.60px;width:400px;text-align:right;top:512.86px;font-size:12px;line-height:12px;font-weight:normal;color:#1f1cc4;-webkit-text-stroke:0.25px #1f1cc4;">$0,04</div>
<div class="t" style="left:493.60px;width:400px;text-align:right;top:512.86px;font-size:12px;line-height:12px;font-weight:normal;color:#1f1cc4;-webkit-text-stroke:0.25px #1f1cc4;">$0,93</div>
<div class="t" style="left:539.80px;width:400px;text-align:right;top:512.86px;font-size:12px;line-height:12px;font-weight:normal;color:#1f1cc4;-webkit-text-stroke:0.25px #1f1cc4;">$1,72</div>
<div class="t" style="left:585.70px;width:400px;text-align:right;top:512.86px;font-size:12px;line-height:12px;font-weight:normal;color:#1f1cc4;-webkit-text-stroke:0.25px #1f1cc4;">$2,81</div>
<div class="t" style="left:632.10px;width:400px;text-align:right;top:512.86px;font-size:12px;line-height:12px;font-weight:normal;color:#1f1cc4;-webkit-text-stroke:0.25px #1f1cc4;">$3,92</div>
<div class="t" style="left:678.00px;width:400px;text-align:right;top:512.86px;font-size:12px;line-height:12px;font-weight:normal;color:#1f1cc4;-webkit-text-stroke:0.25px #1f1cc4;">$4,71</div>
<div class="t" style="left:730.60px;width:400px;text-align:right;top:512.86px;font-size:12px;line-height:12px;font-weight:normal;color:#1f1cc4;-webkit-text-stroke:0.25px #1f1cc4;">$5,16</div>
<div class="t" style="left:778.10px;width:400px;text-align:right;top:512.86px;font-size:12px;line-height:12px;font-weight:normal;color:#62666e;letter-spacing:0.3px;">---</div>
<div class="t" style="left:831.25px;width:400px;text-align:right;top:512.86px;font-size:12px;line-height:12px;font-weight:normal;color:#1f1cc4;-webkit-text-stroke:0.25px #1f1cc4;">$2,84</div>
<div class="t" style="left:682.30px;top:530.54px;font-size:12px;line-height:12px;font-weight:normal;color:#464b56;letter-spacing:0.15px;">LAPINS</div>
<div class="t" style="left:754.90px;top:530.54px;font-size:12px;line-height:12px;font-weight:normal;color:#464b56;">49</div>
<div class="t" style="left:443.60px;width:400px;text-align:right;top:530.54px;font-size:12px;line-height:12px;font-weight:normal;color:#d81e1e;-webkit-text-stroke:0.25px #d81e1e;">$-0,11</div>
<div class="t" style="left:493.60px;width:400px;text-align:right;top:530.54px;font-size:12px;line-height:12px;font-weight:normal;color:#1f1cc4;-webkit-text-stroke:0.25px #1f1cc4;">$0,53</div>
<div class="t" style="left:539.80px;width:400px;text-align:right;top:530.54px;font-size:12px;line-height:12px;font-weight:normal;color:#1f1cc4;-webkit-text-stroke:0.25px #1f1cc4;">$1,32</div>
<div class="t" style="left:585.70px;width:400px;text-align:right;top:530.54px;font-size:12px;line-height:12px;font-weight:normal;color:#1f1cc4;-webkit-text-stroke:0.25px #1f1cc4;">$2,14</div>
<div class="t" style="left:632.10px;width:400px;text-align:right;top:530.54px;font-size:12px;line-height:12px;font-weight:normal;color:#1f1cc4;-webkit-text-stroke:0.25px #1f1cc4;">$3,19</div>
<div class="t" style="left:678.00px;width:400px;text-align:right;top:530.54px;font-size:12px;line-height:12px;font-weight:normal;color:#1f1cc4;-webkit-text-stroke:0.25px #1f1cc4;">$3,83</div>
<div class="t" style="left:730.60px;width:400px;text-align:right;top:530.54px;font-size:12px;line-height:12px;font-weight:normal;color:#1f1cc4;-webkit-text-stroke:0.25px #1f1cc4;">$3,62</div>
<div class="t" style="left:778.10px;width:400px;text-align:right;top:530.54px;font-size:12px;line-height:12px;font-weight:normal;color:#62666e;letter-spacing:0.3px;">---</div>
<div class="t" style="left:831.25px;width:400px;text-align:right;top:530.54px;font-size:12px;line-height:12px;font-weight:normal;color:#1f1cc4;-webkit-text-stroke:0.25px #1f1cc4;">$2,15</div>
<div class="t" style="left:682.30px;top:548.22px;font-size:12px;line-height:12px;font-weight:normal;color:#464b56;letter-spacing:0.15px;">LAPINS</div>
<div class="t" style="left:754.90px;top:548.22px;font-size:12px;line-height:12px;font-weight:normal;color:#464b56;">50</div>
<div class="t" style="left:443.60px;width:400px;text-align:right;top:548.22px;font-size:12px;line-height:12px;font-weight:normal;color:#d81e1e;-webkit-text-stroke:0.25px #d81e1e;">$-0,26</div>
<div class="t" style="left:493.60px;width:400px;text-align:right;top:548.22px;font-size:12px;line-height:12px;font-weight:normal;color:#1f1cc4;-webkit-text-stroke:0.25px #1f1cc4;">$0,19</div>
<div class="t" style="left:539.80px;width:400px;text-align:right;top:548.22px;font-size:12px;line-height:12px;font-weight:normal;color:#1f1cc4;-webkit-text-stroke:0.25px #1f1cc4;">$1,05</div>
<div class="t" style="left:585.70px;width:400px;text-align:right;top:548.22px;font-size:12px;line-height:12px;font-weight:normal;color:#1f1cc4;-webkit-text-stroke:0.25px #1f1cc4;">$1,94</div>
<div class="t" style="left:632.10px;width:400px;text-align:right;top:548.22px;font-size:12px;line-height:12px;font-weight:normal;color:#1f1cc4;-webkit-text-stroke:0.25px #1f1cc4;">$2,98</div>
<div class="t" style="left:678.00px;width:400px;text-align:right;top:548.22px;font-size:12px;line-height:12px;font-weight:normal;color:#1f1cc4;-webkit-text-stroke:0.25px #1f1cc4;">$4,02</div>
<div class="t" style="left:730.60px;width:400px;text-align:right;top:548.22px;font-size:12px;line-height:12px;font-weight:normal;color:#1f1cc4;-webkit-text-stroke:0.25px #1f1cc4;">$3,52</div>
<div class="t" style="left:778.10px;width:400px;text-align:right;top:548.22px;font-size:12px;line-height:12px;font-weight:normal;color:#62666e;letter-spacing:0.3px;">---</div>
<div class="t" style="left:831.25px;width:400px;text-align:right;top:548.22px;font-size:12px;line-height:12px;font-weight:normal;color:#1f1cc4;-webkit-text-stroke:0.25px #1f1cc4;">$2,00</div>
<div class="t" style="left:682.30px;top:565.90px;font-size:12px;line-height:12px;font-weight:normal;color:#464b56;letter-spacing:0.15px;">LAPINS</div>
<div class="t" style="left:754.90px;top:565.90px;font-size:12px;line-height:12px;font-weight:normal;color:#464b56;">51</div>
<div class="t" style="left:443.60px;width:400px;text-align:right;top:565.90px;font-size:12px;line-height:12px;font-weight:normal;color:#d81e1e;-webkit-text-stroke:0.25px #d81e1e;">$-0,82</div>
<div class="t" style="left:493.60px;width:400px;text-align:right;top:565.90px;font-size:12px;line-height:12px;font-weight:normal;color:#d81e1e;-webkit-text-stroke:0.25px #d81e1e;">$-0,18</div>
<div class="t" style="left:539.80px;width:400px;text-align:right;top:565.90px;font-size:12px;line-height:12px;font-weight:normal;color:#1f1cc4;-webkit-text-stroke:0.25px #1f1cc4;">$0,71</div>
<div class="t" style="left:585.70px;width:400px;text-align:right;top:565.90px;font-size:12px;line-height:12px;font-weight:normal;color:#1f1cc4;-webkit-text-stroke:0.25px #1f1cc4;">$1,74</div>
<div class="t" style="left:632.10px;width:400px;text-align:right;top:565.90px;font-size:12px;line-height:12px;font-weight:normal;color:#1f1cc4;-webkit-text-stroke:0.25px #1f1cc4;">$2,93</div>
<div class="t" style="left:678.00px;width:400px;text-align:right;top:565.90px;font-size:12px;line-height:12px;font-weight:normal;color:#1f1cc4;-webkit-text-stroke:0.25px #1f1cc4;">$3,97</div>
<div class="t" style="left:730.60px;width:400px;text-align:right;top:565.90px;font-size:12px;line-height:12px;font-weight:normal;color:#1f1cc4;-webkit-text-stroke:0.25px #1f1cc4;">$4,73</div>
<div class="t" style="left:778.10px;width:400px;text-align:right;top:565.90px;font-size:12px;line-height:12px;font-weight:normal;color:#62666e;letter-spacing:0.3px;">---</div>
<div class="t" style="left:831.25px;width:400px;text-align:right;top:565.90px;font-size:12px;line-height:12px;font-weight:normal;color:#1f1cc4;-webkit-text-stroke:0.25px #1f1cc4;">$2,00</div>
<div class="t" style="left:682.30px;top:583.58px;font-size:12px;line-height:12px;font-weight:normal;color:#464b56;letter-spacing:0.15px;">RAINIER</div>
<div class="t" style="left:754.90px;top:583.58px;font-size:12px;line-height:12px;font-weight:normal;color:#464b56;">48</div>
<div class="t" style="left:443.60px;width:400px;text-align:right;top:583.58px;font-size:12px;line-height:12px;font-weight:normal;color:#d81e1e;-webkit-text-stroke:0.25px #d81e1e;">$-0,80</div>
<div class="t" style="left:493.60px;width:400px;text-align:right;top:583.58px;font-size:12px;line-height:12px;font-weight:normal;color:#d81e1e;-webkit-text-stroke:0.25px #d81e1e;">$-0,44</div>
<div class="t" style="left:539.80px;width:400px;text-align:right;top:583.58px;font-size:12px;line-height:12px;font-weight:normal;color:#1f1cc4;-webkit-text-stroke:0.25px #1f1cc4;">$4,86</div>
<div class="t" style="left:585.70px;width:400px;text-align:right;top:583.58px;font-size:12px;line-height:12px;font-weight:normal;color:#1f1cc4;-webkit-text-stroke:0.25px #1f1cc4;">$5,06</div>
<div class="t" style="left:632.10px;width:400px;text-align:right;top:583.58px;font-size:12px;line-height:12px;font-weight:normal;color:#1f1cc4;-webkit-text-stroke:0.25px #1f1cc4;">$5,97</div>
<div class="t" style="left:678.00px;width:400px;text-align:right;top:583.58px;font-size:12px;line-height:12px;font-weight:normal;color:#1f1cc4;-webkit-text-stroke:0.25px #1f1cc4;">$7,45</div>
<div class="t" style="left:730.60px;width:400px;text-align:right;top:583.58px;font-size:12px;line-height:12px;font-weight:normal;color:#1f1cc4;-webkit-text-stroke:0.25px #1f1cc4;">$7,57</div>
<div class="t" style="left:778.10px;width:400px;text-align:right;top:583.58px;font-size:12px;line-height:12px;font-weight:normal;color:#62666e;letter-spacing:0.3px;">---</div>
<div class="t" style="left:831.25px;width:400px;text-align:right;top:583.58px;font-size:12px;line-height:12px;font-weight:normal;color:#1f1cc4;-webkit-text-stroke:0.25px #1f1cc4;">$5,17</div>
<div class="t" style="left:682.30px;top:601.26px;font-size:12px;line-height:12px;font-weight:normal;color:#464b56;letter-spacing:0.15px;">RAINIER</div>
<div class="t" style="left:754.90px;top:601.26px;font-size:12px;line-height:12px;font-weight:normal;color:#464b56;">49</div>
<div class="t" style="left:443.90px;width:400px;text-align:right;top:601.26px;font-size:12px;line-height:12px;font-weight:normal;color:#62666e;letter-spacing:0.3px;">---</div>
<div class="t" style="left:493.60px;width:400px;text-align:right;top:601.26px;font-size:12px;line-height:12px;font-weight:normal;color:#1f1cc4;-webkit-text-stroke:0.25px #1f1cc4;">$0,14</div>
<div class="t" style="left:539.80px;width:400px;text-align:right;top:601.26px;font-size:12px;line-height:12px;font-weight:normal;color:#1f1cc4;-webkit-text-stroke:0.25px #1f1cc4;">$4,04</div>
<div class="t" style="left:585.70px;width:400px;text-align:right;top:601.26px;font-size:12px;line-height:12px;font-weight:normal;color:#1f1cc4;-webkit-text-stroke:0.25px #1f1cc4;">$4,92</div>
<div class="t" style="left:632.10px;width:400px;text-align:right;top:601.26px;font-size:12px;line-height:12px;font-weight:normal;color:#1f1cc4;-webkit-text-stroke:0.25px #1f1cc4;">$8,23</div>
<div class="t" style="left:678.00px;width:400px;text-align:right;top:601.26px;font-size:12px;line-height:12px;font-weight:normal;color:#1f1cc4;-webkit-text-stroke:0.25px #1f1cc4;">$8,67</div>
<div class="t" style="left:730.60px;width:400px;text-align:right;top:601.26px;font-size:12px;line-height:12px;font-weight:normal;color:#1f1cc4;-webkit-text-stroke:0.25px #1f1cc4;">$11,20</div>
<div class="t" style="left:778.10px;width:400px;text-align:right;top:601.26px;font-size:12px;line-height:12px;font-weight:normal;color:#62666e;letter-spacing:0.3px;">---</div>
<div class="t" style="left:831.25px;width:400px;text-align:right;top:601.26px;font-size:12px;line-height:12px;font-weight:normal;color:#1f1cc4;-webkit-text-stroke:0.25px #1f1cc4;">$6,83</div>
<div class="t" style="left:682.30px;top:618.94px;font-size:12px;line-height:12px;font-weight:normal;color:#464b56;letter-spacing:0.15px;">RAINIER</div>
<div class="t" style="left:754.90px;top:618.94px;font-size:12px;line-height:12px;font-weight:normal;color:#464b56;">50</div>
<div class="t" style="left:443.60px;width:400px;text-align:right;top:618.94px;font-size:12px;line-height:12px;font-weight:normal;color:#d81e1e;-webkit-text-stroke:0.25px #d81e1e;">$-2,06</div>
<div class="t" style="left:493.60px;width:400px;text-align:right;top:618.94px;font-size:12px;line-height:12px;font-weight:normal;color:#d81e1e;-webkit-text-stroke:0.25px #d81e1e;">$-0,22</div>
<div class="t" style="left:539.80px;width:400px;text-align:right;top:618.94px;font-size:12px;line-height:12px;font-weight:normal;color:#1f1cc4;-webkit-text-stroke:0.25px #1f1cc4;">$2,78</div>
<div class="t" style="left:585.70px;width:400px;text-align:right;top:618.94px;font-size:12px;line-height:12px;font-weight:normal;color:#1f1cc4;-webkit-text-stroke:0.25px #1f1cc4;">$5,64</div>
<div class="t" style="left:632.10px;width:400px;text-align:right;top:618.94px;font-size:12px;line-height:12px;font-weight:normal;color:#1f1cc4;-webkit-text-stroke:0.25px #1f1cc4;">$7,52</div>
<div class="t" style="left:678.00px;width:400px;text-align:right;top:618.94px;font-size:12px;line-height:12px;font-weight:normal;color:#1f1cc4;-webkit-text-stroke:0.25px #1f1cc4;">$8,67</div>
<div class="t" style="left:730.60px;width:400px;text-align:right;top:618.94px;font-size:12px;line-height:12px;font-weight:normal;color:#1f1cc4;-webkit-text-stroke:0.25px #1f1cc4;">$10,77</div>
<div class="t" style="left:778.10px;width:400px;text-align:right;top:618.94px;font-size:12px;line-height:12px;font-weight:normal;color:#62666e;letter-spacing:0.3px;">---</div>
<div class="t" style="left:831.25px;width:400px;text-align:right;top:618.94px;font-size:12px;line-height:12px;font-weight:normal;color:#1f1cc4;-webkit-text-stroke:0.25px #1f1cc4;">$5,64</div>
<div class="t" style="left:682.30px;top:636.62px;font-size:12px;line-height:12px;font-weight:normal;color:#464b56;letter-spacing:0.15px;">RAINIER</div>
<div class="t" style="left:754.90px;top:636.62px;font-size:12px;line-height:12px;font-weight:normal;color:#464b56;">51</div>
<div class="t" style="left:443.90px;width:400px;text-align:right;top:636.62px;font-size:12px;line-height:12px;font-weight:normal;color:#62666e;letter-spacing:0.3px;">---</div>
<div class="t" style="left:493.60px;width:400px;text-align:right;top:636.62px;font-size:12px;line-height:12px;font-weight:normal;color:#1f1cc4;-webkit-text-stroke:0.25px #1f1cc4;">$0,57</div>
<div class="t" style="left:539.80px;width:400px;text-align:right;top:636.62px;font-size:12px;line-height:12px;font-weight:normal;color:#1f1cc4;-webkit-text-stroke:0.25px #1f1cc4;">$4,05</div>
<div class="t" style="left:585.70px;width:400px;text-align:right;top:636.62px;font-size:12px;line-height:12px;font-weight:normal;color:#1f1cc4;-webkit-text-stroke:0.25px #1f1cc4;">$6,18</div>
<div class="t" style="left:632.10px;width:400px;text-align:right;top:636.62px;font-size:12px;line-height:12px;font-weight:normal;color:#1f1cc4;-webkit-text-stroke:0.25px #1f1cc4;">$7,10</div>
<div class="t" style="left:678.00px;width:400px;text-align:right;top:636.62px;font-size:12px;line-height:12px;font-weight:normal;color:#1f1cc4;-webkit-text-stroke:0.25px #1f1cc4;">$7,73</div>
<div class="t" style="left:730.60px;width:400px;text-align:right;top:636.62px;font-size:12px;line-height:12px;font-weight:normal;color:#1f1cc4;-webkit-text-stroke:0.25px #1f1cc4;">$8,89</div>
<div class="t" style="left:778.10px;width:400px;text-align:right;top:636.62px;font-size:12px;line-height:12px;font-weight:normal;color:#62666e;letter-spacing:0.3px;">---</div>
<div class="t" style="left:831.25px;width:400px;text-align:right;top:636.62px;font-size:12px;line-height:12px;font-weight:normal;color:#1f1cc4;-webkit-text-stroke:0.25px #1f1cc4;">$6,74</div>
<div class="t" style="left:682.30px;top:654.30px;font-size:12px;line-height:12px;font-weight:normal;color:#464b56;letter-spacing:0.15px;">SANTINA</div>
<div class="t" style="left:754.90px;top:654.30px;font-size:12px;line-height:12px;font-weight:normal;color:#464b56;">48</div>
<div class="t" style="left:443.60px;width:400px;text-align:right;top:654.30px;font-size:12px;line-height:12px;font-weight:normal;color:#1f1cc4;-webkit-text-stroke:0.25px #1f1cc4;">$0,36</div>
<div class="t" style="left:493.60px;width:400px;text-align:right;top:654.30px;font-size:12px;line-height:12px;font-weight:normal;color:#1f1cc4;-webkit-text-stroke:0.25px #1f1cc4;">$1,20</div>
<div class="t" style="left:539.80px;width:400px;text-align:right;top:654.30px;font-size:12px;line-height:12px;font-weight:normal;color:#1f1cc4;-webkit-text-stroke:0.25px #1f1cc4;">$2,15</div>
<div class="t" style="left:585.70px;width:400px;text-align:right;top:654.30px;font-size:12px;line-height:12px;font-weight:normal;color:#1f1cc4;-webkit-text-stroke:0.25px #1f1cc4;">$3,17</div>
<div class="t" style="left:632.10px;width:400px;text-align:right;top:654.30px;font-size:12px;line-height:12px;font-weight:normal;color:#1f1cc4;-webkit-text-stroke:0.25px #1f1cc4;">$4,42</div>
<div class="t" style="left:678.00px;width:400px;text-align:right;top:654.30px;font-size:12px;line-height:12px;font-weight:normal;color:#1f1cc4;-webkit-text-stroke:0.25px #1f1cc4;">$5,40</div>
<div class="t" style="left:730.60px;width:400px;text-align:right;top:654.30px;font-size:12px;line-height:12px;font-weight:normal;color:#1f1cc4;-webkit-text-stroke:0.25px #1f1cc4;">$6,01</div>
<div class="t" style="left:778.10px;width:400px;text-align:right;top:654.30px;font-size:12px;line-height:12px;font-weight:normal;color:#62666e;letter-spacing:0.3px;">---</div>
<div class="t" style="left:831.25px;width:400px;text-align:right;top:654.30px;font-size:12px;line-height:12px;font-weight:normal;color:#1f1cc4;-webkit-text-stroke:0.25px #1f1cc4;">$3,00</div>
<div class="t" style="left:682.30px;top:671.98px;font-size:12px;line-height:12px;font-weight:normal;color:#464b56;letter-spacing:0.15px;">SANTINA</div>
<div class="t" style="left:754.90px;top:671.98px;font-size:12px;line-height:12px;font-weight:normal;color:#464b56;">49</div>
<div class="t" style="left:443.60px;width:400px;text-align:right;top:671.98px;font-size:12px;line-height:12px;font-weight:normal;color:#1f1cc4;-webkit-text-stroke:0.25px #1f1cc4;">$0,03</div>
<div class="t" style="left:493.60px;width:400px;text-align:right;top:671.98px;font-size:12px;line-height:12px;font-weight:normal;color:#1f1cc4;-webkit-text-stroke:0.25px #1f1cc4;">$0,67</div>
<div class="t" style="left:539.80px;width:400px;text-align:right;top:671.98px;font-size:12px;line-height:12px;font-weight:normal;color:#1f1cc4;-webkit-text-stroke:0.25px #1f1cc4;">$1,44</div>
<div class="t" style="left:585.70px;width:400px;text-align:right;top:671.98px;font-size:12px;line-height:12px;font-weight:normal;color:#1f1cc4;-webkit-text-stroke:0.25px #1f1cc4;">$2,40</div>
<div class="t" style="left:632.10px;width:400px;text-align:right;top:671.98px;font-size:12px;line-height:12px;font-weight:normal;color:#1f1cc4;-webkit-text-stroke:0.25px #1f1cc4;">$3,37</div>
<div class="t" style="left:678.00px;width:400px;text-align:right;top:671.98px;font-size:12px;line-height:12px;font-weight:normal;color:#1f1cc4;-webkit-text-stroke:0.25px #1f1cc4;">$4,42</div>
<div class="t" style="left:730.60px;width:400px;text-align:right;top:671.98px;font-size:12px;line-height:12px;font-weight:normal;color:#1f1cc4;-webkit-text-stroke:0.25px #1f1cc4;">$6,07</div>
<div class="t" style="left:778.10px;width:400px;text-align:right;top:671.98px;font-size:12px;line-height:12px;font-weight:normal;color:#62666e;letter-spacing:0.3px;">---</div>
<div class="t" style="left:831.25px;width:400px;text-align:right;top:671.98px;font-size:12px;line-height:12px;font-weight:normal;color:#1f1cc4;-webkit-text-stroke:0.25px #1f1cc4;">$2,24</div>
<div class="t" style="left:682.30px;top:689.66px;font-size:12px;line-height:12px;font-weight:normal;color:#464b56;letter-spacing:0.15px;">SANTINA</div>
<div class="t" style="left:754.90px;top:689.66px;font-size:12px;line-height:12px;font-weight:normal;color:#464b56;">50</div>
<div class="t" style="left:443.60px;width:400px;text-align:right;top:689.66px;font-size:12px;line-height:12px;font-weight:normal;color:#1f1cc4;-webkit-text-stroke:0.25px #1f1cc4;"></div>
<div class="t" style="left:493.60px;width:400px;text-align:right;top:689.66px;font-size:12px;line-height:12px;font-weight:normal;color:#1f1cc4;-webkit-text-stroke:0.25px #1f1cc4;"></div>
<div class="t" style="left:539.80px;width:400px;text-align:right;top:689.66px;font-size:12px;line-height:12px;font-weight:normal;color:#1f1cc4;-webkit-text-stroke:0.25px #1f1cc4;"></div>
<div class="t" style="left:585.70px;width:400px;text-align:right;top:689.66px;font-size:12px;line-height:12px;font-weight:normal;color:#1f1cc4;-webkit-text-stroke:0.25px #1f1cc4;"></div>
<div class="t" style="left:632.10px;width:400px;text-align:right;top:689.66px;font-size:12px;line-height:12px;font-weight:normal;color:#1f1cc4;-webkit-text-stroke:0.25px #1f1cc4;"></div>
<div class="t" style="left:678.00px;width:400px;text-align:right;top:689.66px;font-size:12px;line-height:12px;font-weight:normal;color:#1f1cc4;-webkit-text-stroke:0.25px #1f1cc4;"></div>
<div class="t" style="left:730.60px;width:400px;text-align:right;top:689.66px;font-size:12px;line-height:12px;font-weight:normal;color:#1f1cc4;-webkit-text-stroke:0.25px #1f1cc4;"></div>
<div class="t" style="left:777.80px;width:400px;text-align:right;top:689.66px;font-size:12px;line-height:12px;font-weight:normal;color:#1f1cc4;-webkit-text-stroke:0.25px #1f1cc4;"></div>
<div class="t" style="left:831.25px;width:400px;text-align:right;top:689.66px;font-size:12px;line-height:12px;font-weight:normal;color:#1f1cc4;-webkit-text-stroke:0.25px #1f1cc4;"></div>
<div class="r" style="left:624.00px;top:305.00px;width:16.30px;height:400.00px;background:#fcfcfd;"></div>
<svg class="r" style="left:631.00px;top:309.50px" width="8" height="5.5" viewBox="0 0 8 5.5"><path d="M4 0L8 5.5H0Z" fill="#8c8c8c"/></svg>
<div class="r" style="left:631.10px;top:320.20px;width:7.80px;height:361.60px;background:#8c8c8c;border-radius:4px;"></div>
<div class="r" style="left:1238.75px;top:393.20px;width:15.00px;height:296.00px;background:#fafbfc;"></div>
<svg class="r" style="left:1241.10px;top:397.00px" width="8" height="5.5" viewBox="0 0 8 5.5"><path d="M4 0L8 5.5H0Z" fill="#8c8c8c"/></svg>
<div class="r" style="left:1241.20px;top:408.40px;width:7.80px;height:216.10px;background:#8c8c8c;border-radius:4px;"></div>
<svg class="r" style="left:1241.10px;top:679.20px" width="8" height="5.5" viewBox="0 0 8 5.5"><path d="M0 0H8L4 5.5Z" fill="#8c8c8c"/></svg>
</body></html>
